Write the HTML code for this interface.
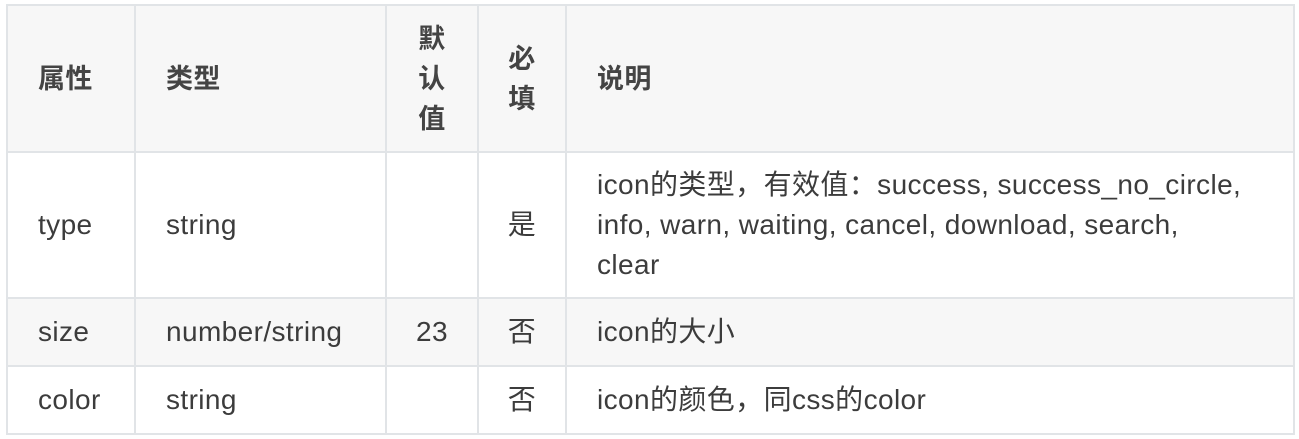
<!DOCTYPE html>
<html><head><meta charset="utf-8"><style>
html,body{margin:0;padding:0;background:#fff;width:1299px;height:439px;overflow:hidden}
table{position:absolute;left:6px;top:4px;border-collapse:collapse;width:1289px;font-family:"Liberation Sans","Noto Sans CJK SC",sans-serif;font-size:28px;letter-spacing:0.4px;color:#3c3c3c;table-layout:fixed}
td,th{border:2px solid #e1e4e7;padding:0 0 0 30px;text-align:left;vertical-align:middle;line-height:40px;white-space:nowrap}
th{font-weight:bold;background:#f7f7f7;color:#444;font-size:27px}
tr.s td{background:#f7f7f7}
.c{text-align:center;padding:0}
</style></head><body>
<table>
<colgroup><col style="width:128px"><col style="width:251px"><col style="width:92px"><col style="width:88px"><col></colgroup>
<tr style="height:147px"><th>属性</th><th>类型</th><th class="c">默<br>认<br>值</th><th class="c">必<br>填</th><th>说明</th></tr>
<tr style="height:146px"><td>type</td><td>string</td><td></td><td class="c">是</td><td>icon的类型，有效值：success, success_no_circle,<br>info, warn, waiting, cancel, download, search,<br>clear</td></tr>
<tr class="s" style="height:68px"><td>size</td><td>number/string</td><td class="c">23</td><td class="c">否</td><td>icon的大小</td></tr>
<tr style="height:68px"><td>color</td><td>string</td><td></td><td class="c">否</td><td>icon的颜色，同css的color</td></tr>
</table>
</body></html>
